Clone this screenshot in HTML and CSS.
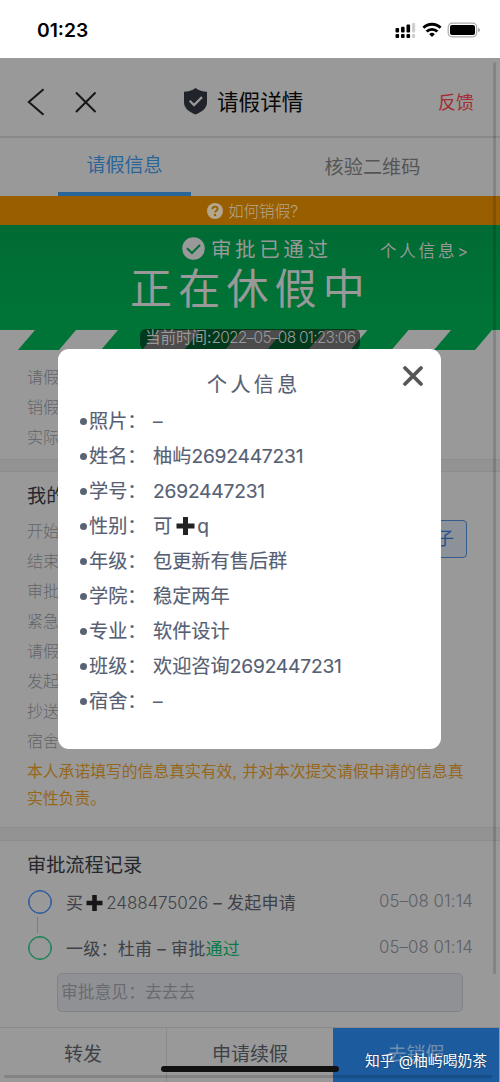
FILE: index.html
```html
<!DOCTYPE html>
<html lang="zh-CN">
<head>
<meta charset="utf-8">
<title>请假详情</title>
<link rel="stylesheet" href="styles.css">
</head>
<body>
<div class="phone">
  <header class="status">
    <span class="clock">01:23</span>
    <svg class="status-icons" width="86" height="18" viewBox="0 0 86 18">
      <g fill="#000"><rect x="0.5" y="6" width="3.6" height="4.5" rx="1"/><rect x="6" y="4.8" width="3.6" height="5.7" rx="1"/><rect x="11.5" y="2.5" width="3.6" height="8" rx="1"/><rect x="0.5" y="12" width="3.6" height="4" rx="1"/><rect x="6" y="12" width="3.6" height="4" rx="1"/><rect x="11.5" y="12" width="3.6" height="4" rx="1"/></g>
      <g fill="#d0d0d0"><rect x="17" y="1" width="3.2" height="9.5" rx="1"/><rect x="17" y="12" width="3.2" height="4" rx="1"/></g>
      <g fill="none" stroke="#000" stroke-width="2.8"><path d="M28.4 5.800a12.200 12.200 0 0 1 17.200 0"/><path d="M31.600 9.500a7.700 7.700 0 0 1 10.800 0"/></g>
      <path d="M37 15l-2.800-2.800a4 4 0 0 1 5.600 0z"/>
      <rect x="53.200" y="1.200" width="28.500" height="13.600" rx="4" fill="none" stroke="#aaa" stroke-width="1.200"/>
      <rect x="55" y="3" width="25" height="10" rx="2"/>
      <path d="M83.300 6v4c1-.3 1.400-1 1.400-2s-.4-1.700-1.400-2z" fill="#888"/>
    </svg>
  </header>

  <nav class="titlebar">
    <svg class="nav-icons" width="76" height="30" viewBox="0 0 76 30" fill="none" stroke="#161616" stroke-width="2"><path d="M17.500 2.200L2.800 15l14.700 12.800M50 5.500l19.500 19.500M69.500 5.500L50 25"/></svg>
    <svg class="shield" width="23" height="27" viewBox="0 0 23 27"><path d="M11.500 0C15 2.700 18.500 3.600 23 3.800v10.500c0 6-5 9.700-11.500 12.200C5 24 0 20.300 0 14.300V3.800C4.500 3.600 8 2.700 11.500 0z" fill="#202329"/><path d="M5.700 12.800l4.300 4.300 8-8" fill="none" stroke="#999" stroke-width="2.200"/></svg>
    <h1>请假详情</h1>
    <span class="feedback">反馈</span>
  </nav>

  <div class="tabs">
    <span class="tab active">请假信息</span>
    <span class="tab">核验二维码</span>
  </div>

  <div class="help">
    <svg width="16" height="16" viewBox="0 0 16 16"><circle cx="8" cy="8" r="8" fill="#b3a78f"/><path d="M5.400 6.200c0-3.500 5.200-3.200 5.200-.3 0 1.800-2.500 1.800-2.500 3.600" fill="none" stroke="#995e00" stroke-width="1.900"/><circle cx="8.100" cy="12" r="1.200" fill="#995e00"/></svg>
    <span>如何销假?</span>
  </div>

  <section class="hero">
    <div class="approved">
      <svg width="23" height="23" viewBox="0 0 23 23"><circle cx="11.500" cy="11.500" r="11.300" fill="#999"/><path d="M5 11.200l5 4.800 8-8" fill="none" stroke="#006d35" stroke-width="2"/></svg>
      <span>审批已通过</span>
    </div>
    <span class="profile-link">个人信息&gt;</span>
    <div class="state">正在休假中</div>
  </section>
  <div class="stripes">
    <svg width="500" height="20" viewBox="0 0 500 20" fill="#007337"><path d="M35 0h41L59 20H18zM118 0h41l-17 20h-41zM201 0h41l-17 20h-41zM284 0h41l-17 20h-41zM367.500 0h41l-17 20h-41zM451 0h41l-17 20h-41z"/></svg>
    <span class="now">当前时间:<i>2022–05–08 01:23:06</i></span>
  </div>

  <ul class="fields first"><li>请假</li><li>销假</li><li>实际</li></ul>
  <div class="band"></div>
  <section class="mine">
    <h2>我的</h2>
    <ul class="fields"><li>开始</li><li>结束</li><li>审批</li><li>紧急</li><li>请假</li><li>发起</li><li>抄送</li><li>宿舍</li></ul>
    <span class="side-button">子</span>
    <p class="promise">本人承诺填写的信息真实有效<span class="comma">,</span>并对本次提交请假申请的信息真<br>实性负责。</p>
  </section>
  <div class="band tall"></div>

  <section class="records">
    <h2>审批流程记录</h2>
    <div class="record">
      <span class="dot blue"></span>
      <span class="who">买<svg class="plus" width="23" height="16" viewBox="0 0 23 16"><path d="M11.500 0v16M3.500 8h16" stroke="#161616" stroke-width="4.600"/></svg><i>2488475026</i> – 发起申请</span>
      <time>05–08 01:14</time>
    </div>
    <div class="record second">
      <span class="dot green"></span>
      <span class="who">一级：杜甫 – 审批<b>通过</b></span>
      <time>05–08 01:14</time>
    </div>
    <div class="comment">审批意见：去去去</div>
  </section>

  <footer class="actions">
    <span>转发</span><span>申请续假</span><span class="primary">去销假</span>
  </footer>

  <div class="scroll-y"></div>
  <div class="scroll-x"></div>
  <div class="home-bar"></div>
  <div class="watermark">知乎 @柚屿喝奶茶</div>

  <div class="dialog">
    <h3>个人信息</h3>
    <svg class="close" width="22" height="22" viewBox="0 0 22 22"><path d="M3 3l16 16M19 3L3 19" stroke="#555" stroke-width="3.800" stroke-linecap="round"/></svg>
    <dl>
      <dt>照片：</dt><dd>–</dd>
      <dt>姓名：</dt><dd>柚屿<i>2692447231</i></dd>
      <dt>学号：</dt><dd><i>2692447231</i></dd>
      <dt>性别：</dt><dd>可<svg class="plus" width="25" height="18" viewBox="0 0 25 18"><path d="M13.500 0v18M4.500 9h18" stroke="#222" stroke-width="5"/></svg><i>q</i></dd>
      <dt>年级：</dt><dd>包更新有售后群</dd>
      <dt>学院：</dt><dd>稳定两年</dd>
      <dt>专业：</dt><dd>软件设计</dd>
      <dt>班级：</dt><dd>欢迎咨询<i>2692447231</i></dd>
      <dt>宿舍：</dt><dd>–</dd>
    </dl>
  </div>
</div>
</body>
</html>
```

FILE: styles.css
```css
* { box-sizing: border-box; margin: 0; padding: 0; }
body { font-family: Inter, "Noto Sans CJK SC", sans-serif; background: #999; }
i, b { font-style: normal; font-weight: inherit; }
ul { list-style: none; }
h1, h2, h3 { font-weight: 400; }
svg { display: block; flex: none; }

.phone { position: relative; width: 500px; height: 1082px; overflow: hidden; display: flex; flex-direction: column; background: #999; white-space: nowrap; }
.phone > * { flex: none; }

.status { height: 58px; background: #fff; display: flex; justify-content: space-between; padding: 18px 19px 0 37px; }
.clock { font-size: 19.3px; line-height: 25px; font-weight: 600; color: #000; }
.status-icons { margin-top: 4px; }

.titlebar { height: 80px; border-bottom: 2px solid #898989; display: flex; align-items: center; padding: 9px 26px 0; }
.nav-icons { margin-right: 82px; }
.shield { margin-top: -1px; }
.titlebar h1 { margin-left: 10px; font-size: 21.6px; line-height: 30px; color: #080808; }
.feedback { margin: -2px 0 0 auto; font-size: 18px; color: #a42d31; }

.tabs { height: 58px; display: flex; }
.tab { width: 133px; margin-left: 58px; height: 58px; line-height: 56px; font-size: 19px; text-align: center; color: #555; }
.tab + .tab { margin-left: 115px; line-height: 59px; font-size: 19.2px; }
.tab.active { color: #2a6599; border-bottom: 4px solid #2a6599; }

.help { height: 29px; background: #995e00; color: #b3a78f; display: flex; align-items: center; justify-content: center; gap: 5px; font-size: 15.6px; padding-left: 5px; font-weight: 300; }
.help span { margin-top: -2px; }

.hero { height: 105px; background: linear-gradient(#006b34, #007537); color: #999; display: grid; grid-template-columns: 380px 1fr; grid-template-rows: 42px 63px; }
.approved { display: flex; align-items: center; gap: 6px; padding: 5px 0 0 182px; font-size: 20.5px; letter-spacing: 3.6px; }
.approved span { margin-top: -2px; }
.profile-link { font-size: 16.5px; letter-spacing: 2.8px; line-height: 53px; }
.state { grid-column: 1 / 3; padding-left: 130px; font-size: 42px; line-height: 43px; letter-spacing: 6.2px; }
.stripes { height: 20px; display: grid; }
.stripes > * { grid-area: 1 / 1; }
.now { width: 220px; height: 21px; margin: -1px 0 0 140px; border-radius: 6px; background: rgba(0, 0, 0, .5); color: #999; font-size: 15.5px; line-height: 18px; padding-left: 5px; }
.now i { letter-spacing: -0.75px; font-weight: 350; }

.fields { padding-left: 27px; font-size: 16px; line-height: 30px; color: #626468; font-weight: 300; }
.fields.first { height: 109px; padding-top: 12px; }
.band { height: 13px; background: #939393; border-top: 1px solid #8c8c8c; border-bottom: 1px solid #8c8c8c; }
.mine { height: 355px; padding-top: 9px; display: grid; grid-template-columns: 420px 47px; grid-template-rows: 35px 240px auto; }
.mine h2 { grid-column: 1 / 3; }
h2 { padding-left: 27px; font-size: 19.2px; line-height: 30px; color: #25272c; }
.side-button { height: 38px; margin-top: 4px; border: 1px solid #315c8c; border-radius: 4px; background: #8d9299; color: #23538b; font-size: 18px; line-height: 35px; padding-left: 15px; }
.promise { grid-column: 1 / 3; padding-left: 27px; font-size: 15.8px; line-height: 27px; color: #96671b; padding-top: 2px; }
.comma { display: inline-block; width: 10px; }
.band.tall { height: 14px; }

.records { height: 186px; padding-top: 9px; }
.records h2 { height: 29px; }
.record { height: 46px; display: flex; align-items: center; padding: 0 27px 0 28px; }
.record.second { position: relative; }
.record.second::before { content: ""; position: absolute; left: 37px; top: -8px; width: 1px; height: 16px; background: #7d7d7d; }
.dot { width: 24px; height: 24px; border: 1.500px solid #2557a0; box-shadow: inset 0 0 0 .5px #2557a0; border-radius: 50%; }
.dot.green { border-color: #138052; box-shadow: inset 0 0 0 .5px #138052; }
.who { margin: -2px 0 0 14px; font-size: 17px; letter-spacing: .25px; color: #3e4147; }
.who i { letter-spacing: -0.1px; font-weight: 300; }
.who b { color: #087a45; }
.plus { display: inline-block; vertical-align: -2px; }
.record time { margin: -3px 0 0 auto; font-size: 16.8px; font-weight: 300; letter-spacing: 0.1px; color: #5d6065; }
.comment { width: 406px; height: 39px; margin: 2px 0 0 57px; border: 1px solid #808388; border-radius: 5px; background: #909194; font-size: 16.8px; line-height: 37px; padding-left: 3px; color: #696b70; }

.actions { height: 55px; border-top: 1px solid #8a8a8a; display: grid; grid-template-columns: 166px 167px 166px; text-align: center; font-size: 19px; line-height: 54px; color: #3e4147; }
.actions span + span { border-left: 1px solid #8a8a8a; }
.actions .primary { background: #1b5b9e; border: 0; color: #7190b0; }

.scroll-y { position: absolute; left: 493px; top: 62px; width: 3px; height: 912px; border-radius: 2px; background: rgba(0, 0, 0, .14); }
.scroll-x { position: absolute; left: 4px; top: 1075px; width: 488px; height: 3px; border-radius: 2px; background: rgba(0, 0, 0, .14); }
.home-bar { position: absolute; left: 161px; top: 1066px; width: 178px; height: 6px; border-radius: 3px; background: #111; }
.watermark { position: absolute; left: 365px; top: 1050px; font-size: 14.8px; line-height: 22px; color: #fff; text-shadow: 0 0 2px rgba(0, 0, 0, .4); }

.dialog { position: absolute; left: 58px; top: 349px; width: 383px; height: 400px; border-radius: 11px; background: #fff; padding: 21px 0 0 22px; color: #566073; -webkit-text-stroke: .15px #566073; }
.dialog h3 { padding-left: 127px; font-size: 20px; line-height: 30px; letter-spacing: 3.400px; }
.close { position: absolute; left: 344px; top: 16px; }
dl { display: grid; grid-template-columns: 73px 1fr; grid-auto-rows: 35.100px; margin-top: 3.500px; font-size: 19.2px; line-height: 35px; }
dt { display: flex; align-items: center; gap: 2px; }
dt::before { content: ""; width: 7px; height: 7px; border-radius: 50%; background: #5a6374; }
dd i { letter-spacing: -0.2px; }
```
